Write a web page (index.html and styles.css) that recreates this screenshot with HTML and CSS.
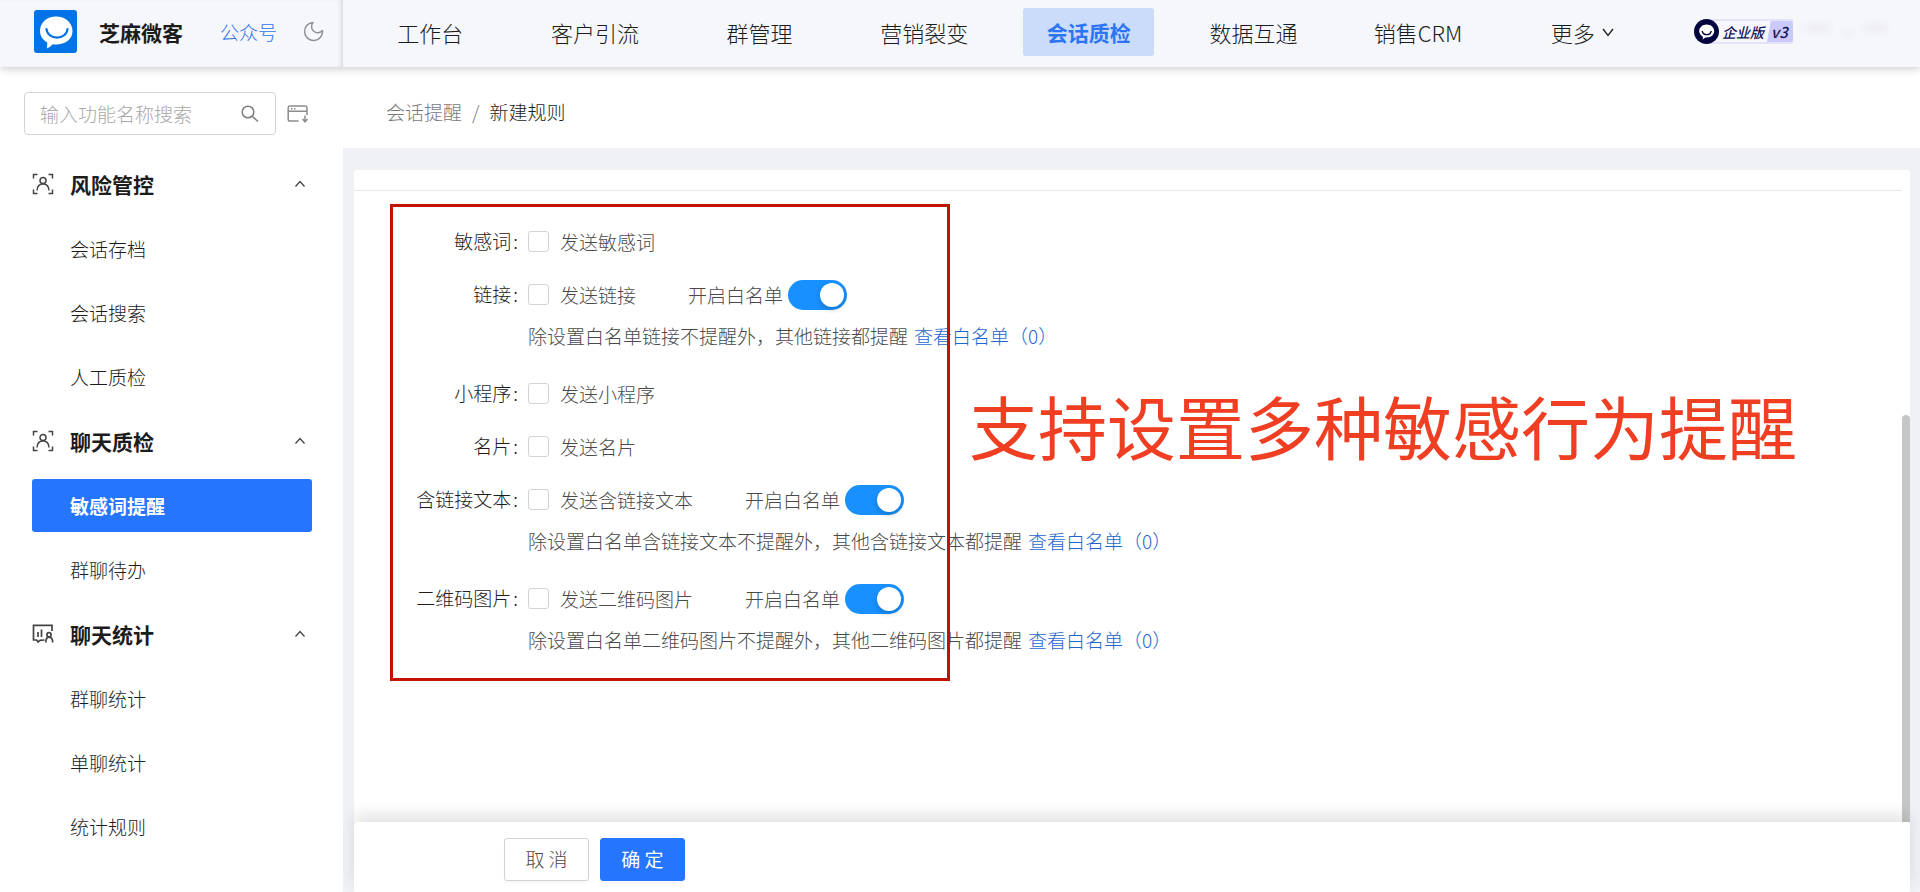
FILE: index.html
```html
<!DOCTYPE html>
<html lang="zh-CN">
<head>
<meta charset="utf-8">
<meta name="viewport" content="width=device-width, initial-scale=1">
<title>新建规则 - 芝麻微客</title>
<link rel="stylesheet" href="styles.css">
</head>
<body>
<svg class="defs" aria-hidden="true">
  <symbol id="i-person" viewBox="0 0 22 22"><g fill="none" stroke="currentColor" stroke-width="1.5"><path d="M1.500 5.500V1.500H5.500M16.500 1.500h4v4M20.500 16.500v4h-4M5.500 20.500h-4v-4"/><circle cx="11" cy="7.500" r="3"/><path d="M5 17.500c.2-4 2.500-6.500 6-6.500s5.800 2.500 6 6.500"/></g></symbol>
  <symbol id="i-stats" viewBox="0 0 22 22"><g fill="none" stroke="currentColor" stroke-width="1.700"><path d="M20 8V2.300H1.500v14.700h3.200l1.300 2 2-1.600 4.500-.4M6 9v5M9.500 6.500V14"/><circle cx="17" cy="11.800" r="2.100"/><path d="M13.800 19.500c0-3.600 1.200-5.400 3.200-5.400s3.700 1.800 3.700 5.400"/></g></symbol>
  <symbol id="i-up" viewBox="0 0 12 12"><path d="M1.500 8.500 6 3.500l4.500 5" fill="none" stroke="currentColor" stroke-width="1.300"/></symbol>
  <symbol id="i-down" viewBox="0 0 14 14"><path d="M2 4 7 10.500 12 4" fill="none" stroke="currentColor" stroke-width="1.300"/></symbol>
</svg>

<header class="header">
  <div class="brand">
    <svg class="logo" viewBox="0 0 43 43" aria-hidden="true"><rect width="43" height="43" rx="3" fill="#0073e6"/><path d="M22 6.500c9 0 16.500 6 16.500 14.500S31 34.500 22 34.500c-1.200 0-2.300 0-3.300-.2-1.200 1.500-3.200 3-5.700 4.200l.3-6C8.800 30 6 26 6 21 6 12.500 13 6.500 22 6.500Z" fill="#fff"/><path d="M12.500 19c1 11.500 20 11.500 21 0" fill="none" stroke="#0073e6" stroke-width="2.200" stroke-linecap="round"/></svg>
    <strong class="brand-name">芝麻微客</strong>
    <a class="brand-link" href="#">公众号</a>
    <button class="icon-btn" type="button" aria-label="深色模式"><svg width="21" height="21" viewBox="0 0 21 21"><path d="M10 1.500A9 9 0 1 0 19.500 9.500 5.800 5.800 0 1 1 10 1.500Z" fill="none" stroke="#8f9094" stroke-width="1.500" stroke-linejoin="round"/></svg></button>
  </div>
  <nav class="nav">
    <a href="#">工作台</a>
    <a href="#">客户引流</a>
    <a href="#">群管理</a>
    <a href="#">营销裂变</a>
    <a class="current" href="#">会话质检</a>
    <a href="#">数据互通</a>
    <a href="#">销售CRM</a>
    <a href="#">更多<svg class="more" aria-hidden="true"><use href="#i-down"/></svg></a>
  </nav>
  <div class="account">
    <div class="plan">
      <svg class="plan-logo" viewBox="0 0 25 25" aria-hidden="true"><circle cx="12.500" cy="12.500" r="12.500" fill="#04043f"/><path d="M12.700 5.500c4.300 0 7.500 2.900 7.500 6.600s-3.200 6.500-7.500 6.500h-1.300l-2.700 2 .2-2.900C6.600 16.600 5.200 14.600 5.200 12.100c0-3.700 3.200-6.600 7.500-6.600Z" fill="#fff"/><path d="M8.300 12.500c1.200 4.200 7.600 4.200 8.800 0" fill="none" stroke="#04043f" stroke-width="1.400" stroke-linecap="round"/></svg>
      <span class="plan-name">企业版</span>
      <span class="plan-level">v3</span>
    </div>
    <svg class="smudge" viewBox="0 0 100 24" aria-hidden="true"><g fill="#ededf1"><ellipse cx="20" cy="8" rx="14" ry="5"/><ellipse cx="50" cy="14" rx="6" ry="3"/><ellipse cx="78" cy="8" rx="13" ry="5"/></g></svg>
  </div>
</header>

<div class="layout">
  <aside class="sidebar">
    <div class="search-row">
      <label class="search">
        <input type="text" placeholder="输入功能名称搜索" aria-label="输入功能名称搜索">
        <svg width="18" height="18" viewBox="0 0 18 18" aria-hidden="true"><circle cx="7" cy="7" r="5.800" fill="none" stroke="#7d7d7d" stroke-width="1.500"/><path d="m11.200 11.200 5.800 5.300" stroke="#7d7d7d" stroke-width="1.500"/></svg>
      </label>
      <button class="icon-btn" type="button" aria-label="收起菜单"><svg width="22" height="20" viewBox="0 0 22 20"><g fill="none" stroke="#8c8c8c" stroke-width="1.500"><path d="M11.500 17H3a1.800 1.800 0 0 1-1.800-1.800V3.800A1.800 1.800 0 0 1 3 2h15.200A1.800 1.800 0 0 1 20 3.800V11M1.200 7.300H20"/><path d="M4 4.700h1.500M7 4.700h1.500M18 11.500v6M15.500 15l2.500 2.800 2.500-2.800"/></g></svg></button>
    </div>
    <section class="group">
      <button class="group-head" type="button"><svg class="group-icon"><use href="#i-person"/></svg><span>风险管控</span><svg class="caret"><use href="#i-up"/></svg></button>
      <a class="item" href="#">会话存档</a>
      <a class="item" href="#">会话搜索</a>
      <a class="item" href="#">人工质检</a>
    </section>
    <section class="group">
      <button class="group-head" type="button"><svg class="group-icon"><use href="#i-person"/></svg><span>聊天质检</span><svg class="caret"><use href="#i-up"/></svg></button>
      <a class="item active" href="#">敏感词提醒</a>
      <a class="item" href="#">群聊待办</a>
    </section>
    <section class="group">
      <button class="group-head" type="button"><svg class="group-icon"><use href="#i-stats"/></svg><span>聊天统计</span><svg class="caret"><use href="#i-up"/></svg></button>
      <a class="item" href="#">群聊统计</a>
      <a class="item" href="#">单聊统计</a>
      <a class="item" href="#">统计规则</a>
    </section>
  </aside>

  <main class="main">
    <nav class="crumbs" aria-label="路径"><a href="#">会话提醒</a><span class="slash">/</span><span class="here">新建规则</span></nav>
    <div class="page">
      <div class="card">
        <form class="rules" id="rules">
          <div class="rule">
            <span class="rule-label">敏感词<i>:</i></span>
            <div class="rule-line"><label class="check"><input type="checkbox">发送敏感词</label></div>
          </div>
          <div class="rule with-help">
            <span class="rule-label">链接<i>:</i></span>
            <div class="rule-line"><label class="check"><input type="checkbox">发送链接</label><label class="toggle">开启白名单<input type="checkbox" role="switch" checked></label></div>
            <p class="help">除设置白名单链接不提醒外，其他链接都提醒<a href="#">查看白名单（0）</a></p>
          </div>
          <div class="rule">
            <span class="rule-label">小程序<i>:</i></span>
            <div class="rule-line"><label class="check"><input type="checkbox">发送小程序</label></div>
          </div>
          <div class="rule">
            <span class="rule-label">名片<i>:</i></span>
            <div class="rule-line"><label class="check"><input type="checkbox">发送名片</label></div>
          </div>
          <div class="rule with-help">
            <span class="rule-label">含链接文本<i>:</i></span>
            <div class="rule-line"><label class="check"><input type="checkbox">发送含链接文本</label><label class="toggle">开启白名单<input type="checkbox" role="switch" checked></label></div>
            <p class="help">除设置白名单含链接文本不提醒外，其他含链接文本都提醒<a href="#">查看白名单（0）</a></p>
          </div>
          <div class="rule with-help">
            <span class="rule-label">二维码图片<i>:</i></span>
            <div class="rule-line"><label class="check"><input type="checkbox">发送二维码图片</label><label class="toggle">开启白名单<input type="checkbox" role="switch" checked></label></div>
            <p class="help">除设置白名单二维码图片不提醒外，其他二维码图片都提醒<a href="#">查看白名单（0）</a></p>
          </div>
          <div class="highlight"></div>
          <div class="callout">支持设置多种敏感行为提醒</div>
        </form>
        <div class="track"><div class="thumb"></div></div>
      </div>
      <footer class="actions">
        <button class="btn" type="button">取 消</button>
        <button class="btn primary" type="submit" form="rules">确 定</button>
      </footer>
    </div>
  </main>
</div>
</body>
</html>
```

FILE: styles.css
```css
* { box-sizing: border-box; }

body {
  margin: 0;
  height: 100vh;
  display: flex;
  flex-direction: column;
  overflow: hidden;
  font-family: "Noto Sans CJK SC", "Noto Sans", sans-serif;
  font-size: 19px;
  font-weight: 300;
  line-height: 28px;
  color: #1c1c1c;
  background: #fff;
}

a { color: inherit; text-decoration: none; }
button, input { font: inherit; color: inherit; margin: 0; }
svg { display: block; flex: none; }
.defs { position: absolute; width: 0; height: 0; }
.icon-btn { padding: 0; border: 0; background: none; }

/* Header */
.header {
  position: relative;
  z-index: 2;
  display: flex;
  flex: none;
  height: 67px;
  background: #f6f7fb;
  box-shadow: 0 2px 8px rgba(0, 0, 0, .2);
}
.brand {
  display: flex;
  align-items: center;
  width: 343px;
  padding: 0 0 4px 34px;
  box-shadow: inset -4px 0 4px -2px rgba(0, 0, 0, .12);
}
.logo { width: 43px; height: 43px; }
.brand-name { margin-left: 22px; font-size: 21px; font-weight: 700; }
.brand-link { margin: 0 26px 0 37px; color: #2f74e8; }
.nav {
  flex: 1;
  display: grid;
  grid-template-columns: repeat(8, 1fr);
  align-items: center;
  justify-items: center;
  padding: 0 0 4px 5px;
  font-size: 22px;
}
.nav a {
  display: flex;
  align-items: center;
  justify-content: center;
  height: 48px;
  white-space: nowrap;
}
.nav .current {
  width: 131px;
  border-radius: 3px;
  background: #cbdcfa;
  color: #2b75f5;
  font-size: 21px;
  font-weight: 700;
}
.more { width: 14px; height: 14px; margin-left: 6px; }
.account {
  display: flex;
  align-items: center;
  width: 255px;
  padding: 0 0 4px 29px;
}
.plan {
  display: flex;
  align-items: center;
  height: 25px;
  border-radius: 12px 3px 3px 12px;
  background: linear-gradient(100deg, #f7f7fe 74%, #cccafc 75%);
  box-shadow: inset 0 2px #e3e3f8, inset 0 -2px #e3e3f8;
  color: #14145a;
  font-size: 14px;
  font-style: italic;
  font-weight: 500;
}
.plan-logo { width: 25px; height: 25px; }
.plan-name { margin-left: 3px; }
.plan-level { margin: 0 5px 0 7px; font-size: 15px; }
.smudge { width: 100px; height: 24px; margin-left: 4px; filter: blur(3px); }

/* Body */
.layout { flex: 1; display: flex; min-height: 0; }

.sidebar { flex: none; width: 343px; padding: 25px 31px 0 24px; }
.search-row { display: flex; align-items: center; gap: 11px; margin-right: -22px; }
.search {
  display: flex;
  align-items: center;
  width: 252px;
  height: 43px;
  padding: 0 16px 0 15px;
  border: 1px solid #d3d3d3;
  border-radius: 4px;
}
.search input {
  flex: 1;
  min-width: 0;
  padding: 0;
  border: 0;
  outline: 0;
  background: none;
}
.search input::placeholder { color: #a8a8a8; opacity: 1; }

.group {
  display: flex;
  flex-direction: column;
  gap: 11px;
  margin: 0 0 12px 8px;
}
.search-row + .group { margin-top: 23px; }
.group-head {
  display: flex;
  align-items: center;
  height: 53px;
  padding: 0 6px 1px 0;
  border: 0;
  background: none;
  font-size: 21px;
  font-weight: 700;
  text-align: left;
}
.group-head span { flex: 1; margin-left: 16px; }
.group-icon, .caret { color: #444; }
.group-icon { width: 22px; height: 22px; }
.caret { width: 12px; height: 12px; }
.item {
  height: 53px;
  padding-left: 38px;
  border-radius: 3px;
  line-height: 53px;
}
.item.active { background: #2575ff; color: #fff; font-weight: 700; }

.main { flex: 1; min-width: 0; display: flex; flex-direction: column; }
.crumbs { flex: none; height: 81px; padding: 31px 43px; }
.crumbs a { color: #7a7a7a; }
.slash { margin: 0 10px; color: #7a7a7a; }

.page {
  flex: 1;
  display: flex;
  flex-direction: column;
  min-height: 0;
  padding: 22px 10px 0 11px;
  background: #f0f1f5;
}
.card {
  flex: 1;
  display: flex;
  min-height: 0;
  border-radius: 3px 3px 0 0;
  background: #fff;
}
.rules {
  position: relative;
  flex: 1;
  margin-top: 20px;
  padding-top: 29px;
  border-top: 1px solid #e6e6e6;
}
.track { width: 8px; display: grid; grid-template-rows: 3fr 5fr; }
.thumb { grid-row: 2; border-radius: 4px 4px 0 0; background: #c6c6c6; }

.rule {
  display: grid;
  grid-template-columns: 174px 1fr;
  grid-auto-rows: 43px;
  align-items: center;
  margin-bottom: 10px;
}
.rule.with-help { grid-template-rows: 43px 41px; margin-bottom: 15px; }
.rule-label { padding-bottom: 2px; text-align: right; white-space: nowrap; }
.rule-label i { margin: 0 10px 0 2px; font-style: normal; }
.rule-line { display: flex; align-items: center; gap: 52px; color: #4a4a4a; }
.check { display: flex; align-items: center; gap: 11px; }
.check input {
  appearance: none;
  width: 21px;
  height: 21px;
  border: 1px solid #d3d3d3;
  border-radius: 3px;
  background: #fff;
}
.toggle { display: flex; align-items: center; gap: 5px; }
.toggle input {
  appearance: none;
  width: 59px;
  height: 30px;
  padding: 3px;
  border-radius: 15px;
  background: #1890ff;
}
.toggle input::before {
  content: "";
  display: block;
  width: 24px;
  height: 24px;
  margin-left: auto;
  border-radius: 50%;
  background: #fff;
  box-shadow: 0 3px 5px rgba(0, 35, 11, .2);
}
.help { grid-column: 2; margin: 0; padding-bottom: 2px; color: #4a4a4a; white-space: nowrap; }
.help a { margin-left: 6px; color: #1f66d0; }

/* Annotations laid over the form */
.highlight {
  position: absolute;
  top: 13px;
  left: 36px;
  width: 560px;
  height: 477px;
  border: 3px solid #c31200;
  pointer-events: none;
}
.callout {
  position: absolute;
  top: 184px;
  left: 615px;
  color: #f03e22;
  font-size: 69px;
  font-weight: 400;
  line-height: 100px;
  white-space: nowrap;
}

.actions {
  position: relative;
  display: flex;
  gap: 11px;
  height: 70px;
  padding: 16px 150px;
  border-radius: 3px 3px 0 0;
  background: #fff;
  box-shadow: 0 -8px 16px rgba(0, 0, 0, .11);
}
.btn {
  width: 85px;
  height: 43px;
  padding: 0 0 2px;
  border: 1px solid #d3d3d3;
  border-radius: 3px;
  background: #fff;
  color: #4a4a4a;
  box-shadow: 0 2px 2px rgba(0, 0, 0, .03);
}
.btn.primary { border-color: #2575ff; background: #2575ff; color: #fff; font-weight: 400; }
```
